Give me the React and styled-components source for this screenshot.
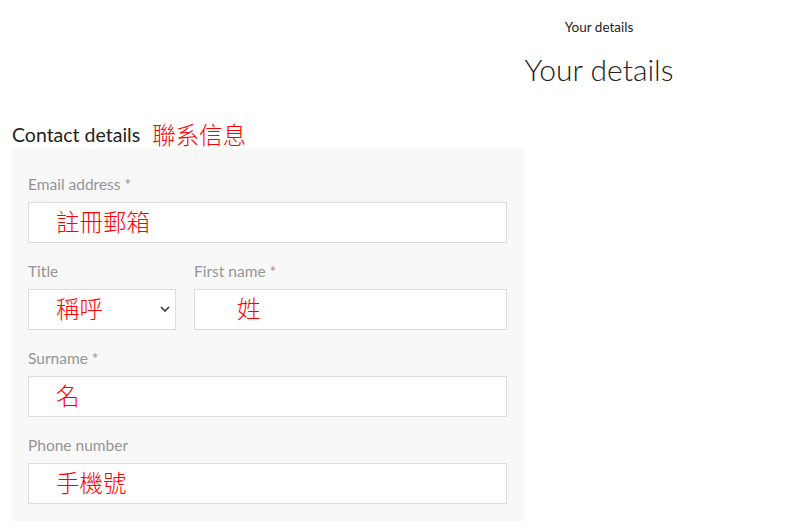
import styled, { createGlobalStyle } from "styled-components";

const GlobalStyle = createGlobalStyle`
  body {
    margin: 0;
    background: #fff;
    font-family: Lato, "Noto Sans", sans-serif;
  }
`;

export default function App() {
    return (
        <Page>
            <GlobalStyle />
            <Header>
                <Crumb>Your details</Crumb>
                <Heading>Your details</Heading>
            </Header>

            <SectionTitle>
                Contact details <Note $size={23.5}>聯系信息</Note>
            </SectionTitle>

            <Panel>
                <Field>
                    <Label>Email address *</Label>
                    <Box><Note>註冊郵箱</Note></Box>
                </Field>

                <Row>
                    <Field $width="148px">
                        <Label>Title</Label>
                        <Box>
                            <Note>稱呼</Note>
                            <Chevron viewBox="0 0 10 6">
                                <path d="M1 1l4 4 4-4" />
                            </Chevron>
                        </Box>
                    </Field>
                    <Field $grow>
                        <Label>First name *</Label>
                        <Box $indent="42px"><Note>姓</Note></Box>
                    </Field>
                </Row>

                <Field>
                    <Label>Surname *</Label>
                    <Box><Note>名</Note></Box>
                </Field>

                <Field>
                    <Label>Phone number</Label>
                    <Box><Note>手機號</Note></Box>
                </Field>
            </Panel>
        </Page>
    )
}

const Page = styled.div`
    width: 800px;
    height: 529px;
    overflow: hidden;
    padding-top: 18px;
    box-sizing: border-box;
`;

const Header = styled.header`
    margin-left: 398px;
    display: flex;
    flex-direction: column;
    align-items: center;
    color: #222;
`;

const Crumb = styled.div`
    font-size: 13.5px;
    line-height: 18px;
`;

const Heading = styled.h1`
    margin: 13px 0 0;
    font-size: 30px;
    font-weight: 300;
    line-height: 40px;
`;

const SectionTitle = styled.h2`
    margin: 32px 0 0 12px;
    font-size: 19.5px;
    font-weight: 400;
    line-height: 28px;
    color: #222;
    display: flex;
    align-items: center;
    gap: 12px;
`;

const Note = styled.span`
    font-family: "Noto Sans CJK TC", sans-serif;
    font-weight: 300;
    color: #ff0000;
    font-size: ${p => p.$size || 23.5}px;
    line-height: 1;
`;

const Panel = styled.section`
    margin-left: 12px;
    width: 512px;
    background: #f8f8f8;
    padding: 25px 17px 17px 16px;
    box-sizing: border-box;
    display: flex;
    flex-direction: column;
    gap: 18px;
`;

const Row = styled.div`
    display: flex;
    gap: 18px;
`;

const Field = styled.div`
    display: flex;
    flex-direction: column;
    gap: 8px;
    width: ${p => p.$width || "auto"};
    flex: ${p => (p.$grow ? 1 : "none")};
`;

const Label = styled.label`
    font-size: 15.5px;
    line-height: 20px;
    color: #959595;
`;

const Box = styled.div`
    height: 41px;
    box-sizing: border-box;
    background: #fff;
    border: 1px solid #dcdcdc;
    display: flex;
    align-items: center;
    padding: 0 5px 2px ${p => p.$indent || "27px"};
`;

const Chevron = styled.svg`
    margin-left: auto;
    width: 10px;
    height: 6px;
    fill: none;
    stroke: #333;
    stroke-width: 1.6;
`;
